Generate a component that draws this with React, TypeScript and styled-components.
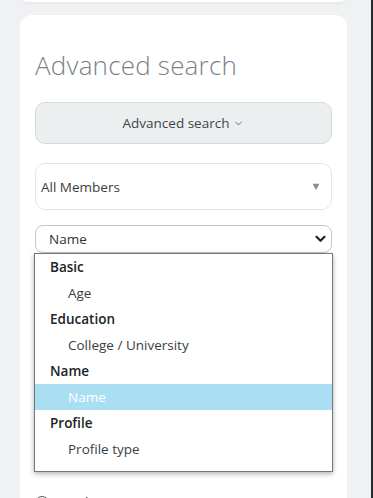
import { createGlobalStyle } from "styled-components";
import styled from "styled-components";
import { ChevronDown } from "lucide-react";

type Entry = { label: string; group?: boolean; active?: boolean };

const entries: Entry[] = [
  { label: "Basic", group: true },
  { label: "Age" },
  { label: "Education", group: true },
  { label: "College / University" },
  { label: "Name", group: true },
  { label: "Name", active: true },
  { label: "Profile", group: true },
  { label: "Profile type" },
];

export default function App() {
  return (
    <>
      <GlobalStyle />
      <Page>
        <TopCard />
        <Card>
          <Heading>Advanced search</Heading>
          <ToggleButton type="button">
            Advanced search <ChevronDown size={11} strokeWidth={1.6} />
          </ToggleButton>
          <MemberSelect>
            <span>All Members</span>
            <svg width="8" height="7" viewBox="0 0 8 7" aria-hidden="true">
              <path d="M0.6 0.8h6.8L4.6 6.1a0.7 0.7 0 0 1-1.2 0z" fill="#8c8c8c" />
            </svg>
          </MemberSelect>
          <FieldWrap>
            <FieldSelect>
              <span>Name</span>
              <svg width="11" height="8" viewBox="0 0 11 8" aria-hidden="true">
                <path d="M1.5 1.8l4 4 4-4" fill="none" stroke="#1f2326" strokeWidth="2.2" strokeLinecap="round" strokeLinejoin="round" />
              </svg>
            </FieldSelect>
            <Listbox role="listbox">
              {entries.map((e, i) => (
                <Row key={i} $group={e.group} $active={e.active}>
                  {e.label}
                </Row>
              ))}
            </Listbox>
          </FieldWrap>
          <TextField placeholder="Search by name" />
          <RadioList>
            <RadioRow>
              <Radio />
              <span>Match any criteria</span>
            </RadioRow>
          </RadioList>
        </Card>
      </Page>
    </>
  );
}

const GlobalStyle = createGlobalStyle`
  html, body {
    margin: 0;
    padding: 0;
    background: #f0f1f3;
  }
  body {
    font-family: "Open Sans", "Liberation Sans", sans-serif;
    overflow: hidden;
  }
`;

const Page = styled.div`
  width: 373px;
  height: 498px;
  box-sizing: border-box;
  padding: 0 24px 0 20px;
  border-right: 2px solid #26282b;
  overflow: hidden;
`;

const TopCard = styled.div`
  height: 14px;
  margin-top: -12px;
  background: #fff;
  border-radius: 12px;
  box-shadow: 0 1px 3px rgba(0, 0, 0, 0.06);
`;

const Card = styled.section`
  margin-top: 13px;
  background: #fff;
  border-radius: 12px;
  padding: 34px 15px 40px;
  display: flex;
  flex-direction: column;
`;

const Heading = styled.h2`
  margin: 0;
  font-family: "Open Sans", sans-serif;
  font-weight: 300;
  font-size: 26px;
  line-height: 32px;
  color: #7b8288;
  letter-spacing: 0.2px;
`;

const ToggleButton = styled.button`
  margin-top: 21px;
  height: 42px;
  border: 1px solid #d6dadc;
  border-radius: 10px;
  background: #eceff0;
  color: #3f4448;
  font-family: "Open Sans", sans-serif;
  font-size: 13.5px;
  display: flex;
  align-items: center;
  justify-content: center;
  gap: 4px;
  padding: 0;
`;

const MemberSelect = styled.div`
  margin-top: 19px;
  height: 47px;
  box-sizing: border-box;
  border: 1px solid #e3e6e8;
  border-radius: 10px;
  display: flex;
  align-items: center;
  justify-content: space-between;
  padding: 0 11px 0 5px;
  font-size: 13.5px;
  color: #3a3d40;
`;

const FieldWrap = styled.div`
  position: relative;
  margin-top: 15px;
`;

const FieldSelect = styled.div`
  height: 28px;
  box-sizing: border-box;
  border: 1px solid #c4c7ca;
  border-radius: 8px;
  display: flex;
  align-items: center;
  justify-content: space-between;
  padding: 0 5px 0 13px;
  font-size: 13.5px;
  color: #2f3235;
`;

const Listbox = styled.div`
  position: absolute;
  top: 100%;
  left: -1px;
  right: -1px;
  z-index: 2;
  background: #fff;
  border: 1px solid #767676;
  box-shadow: 0 2px 5px rgba(0, 0, 0, 0.3);
  padding-bottom: 9px;
`;

const Row = styled.div<{ $group?: boolean; $active?: boolean }>`
  height: 26px;
  display: flex;
  align-items: center;
  padding-left: ${(p) => (p.$group ? "15px" : "33px")};
  font-size: 13.5px;
  font-weight: ${(p) => (p.$group ? 600 : 400)};
  color: ${(p) => (p.$active ? "#fff" : p.$group ? "#202326" : "#3a3d40")};
  background: ${(p) => (p.$active ? "#aadff3" : "transparent")};
`;

const TextField = styled.input`
  margin-top: 15px;
  height: 40px;
  border: 1px solid #e3e6e8;
  border-radius: 10px;
  padding: 0 8px;
`;

const RadioList = styled.div`
  margin-top: 185px;
  display: flex;
  flex-direction: column;
  gap: 8px;
`;

const RadioRow = styled.label`
  display: flex;
  align-items: center;
  gap: 4px;
  font-size: 14px;
  line-height: 16px;
  color: #3a3d40;
`;

const Radio = styled.span`
  width: 12px;
  height: 12px;
  border: 1px solid #555;
  border-radius: 50%;
`;
